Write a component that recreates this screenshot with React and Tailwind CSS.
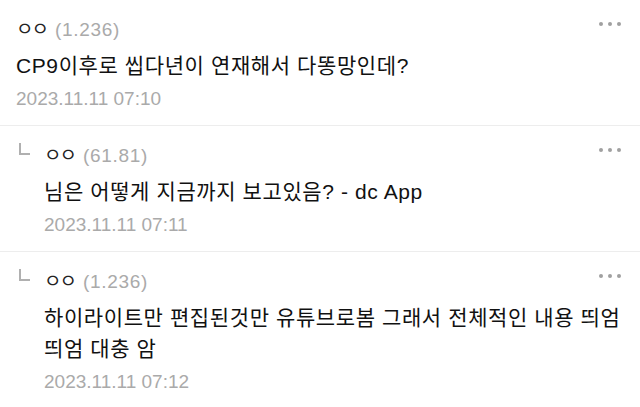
import React from 'react';

const comments = [
    { id: 1, reply: false, name: 'ㅇㅇ', ip: '(1.236)', lines: ['CP9이후로 씹다년이 연재해서 다똥망인데?'], date: '2023.11.11 07:10' },
    { id: 2, reply: true, name: 'ㅇㅇ', ip: '(61.81)', lines: ['님은 어떻게 지금까지 보고있음? - dc App'], date: '2023.11.11 07:11' },
    { id: 3, reply: true, name: 'ㅇㅇ', ip: '(1.236)', lines: ['하이라이트만 편집된것만 유튜브로봄 그래서 전체적인 내용 띄엄', '띄엄 대충 암'], date: '2023.11.11 07:12' },
];

const font = { fontFamily: '"Liberation Sans", "Noto Sans CJK KR", sans-serif' };

// 점 세개 메뉴
const Dots = () => (
    <div className="flex gap-[5px] mt-[4px]">
        <span className="w-[4px] h-[4px] rounded-full bg-[#a0a0a0]" />
        <span className="w-[4px] h-[4px] rounded-full bg-[#a0a0a0]" />
        <span className="w-[4px] h-[4px] rounded-full bg-[#a0a0a0]" />
    </div>
);

const Comment = ({ c }) => (
    <div className="flex border-b border-[#ededed] last:border-b-0">
        {c.reply && (
            <div className="w-[28px] shrink-0 pl-[19px] pt-[17px]">
                <div className="w-[11px] h-[12px] border-l-2 border-b-2 border-[#b0b0b0]" />
            </div>
        )}
        <div className="flex-1 min-w-0 pl-[16px] pr-[19px] pt-[18px] pb-[14px]">
            <div className="flex items-start justify-between">
                <div className="flex items-center gap-[8px] text-[19px] leading-[24px]">
                    <span className="text-[#222] tracking-[-2px]">{c.name}</span>
                    <span className="text-[#aaa] tracking-[0.7px]">{c.ip}</span>
                </div>
                <Dots />
            </div>
            <div className="mt-[8px] text-[21px] leading-[31px] text-[#111] tracking-[0.6px] whitespace-nowrap">
                {c.lines.map((l, i) => <div key={i}>{l}</div>)}
            </div>
            <div className="mt-[6px] text-[19px] leading-[24px] text-[#aaa]">{c.date}</div>
        </div>
    </div>
);

export default function App() {
    return (
        <div className="w-[640px] h-[407px] bg-white overflow-hidden" style={font}>
            {comments.map(c => <Comment key={c.id} c={c} />)}
        </div>
    );
}
